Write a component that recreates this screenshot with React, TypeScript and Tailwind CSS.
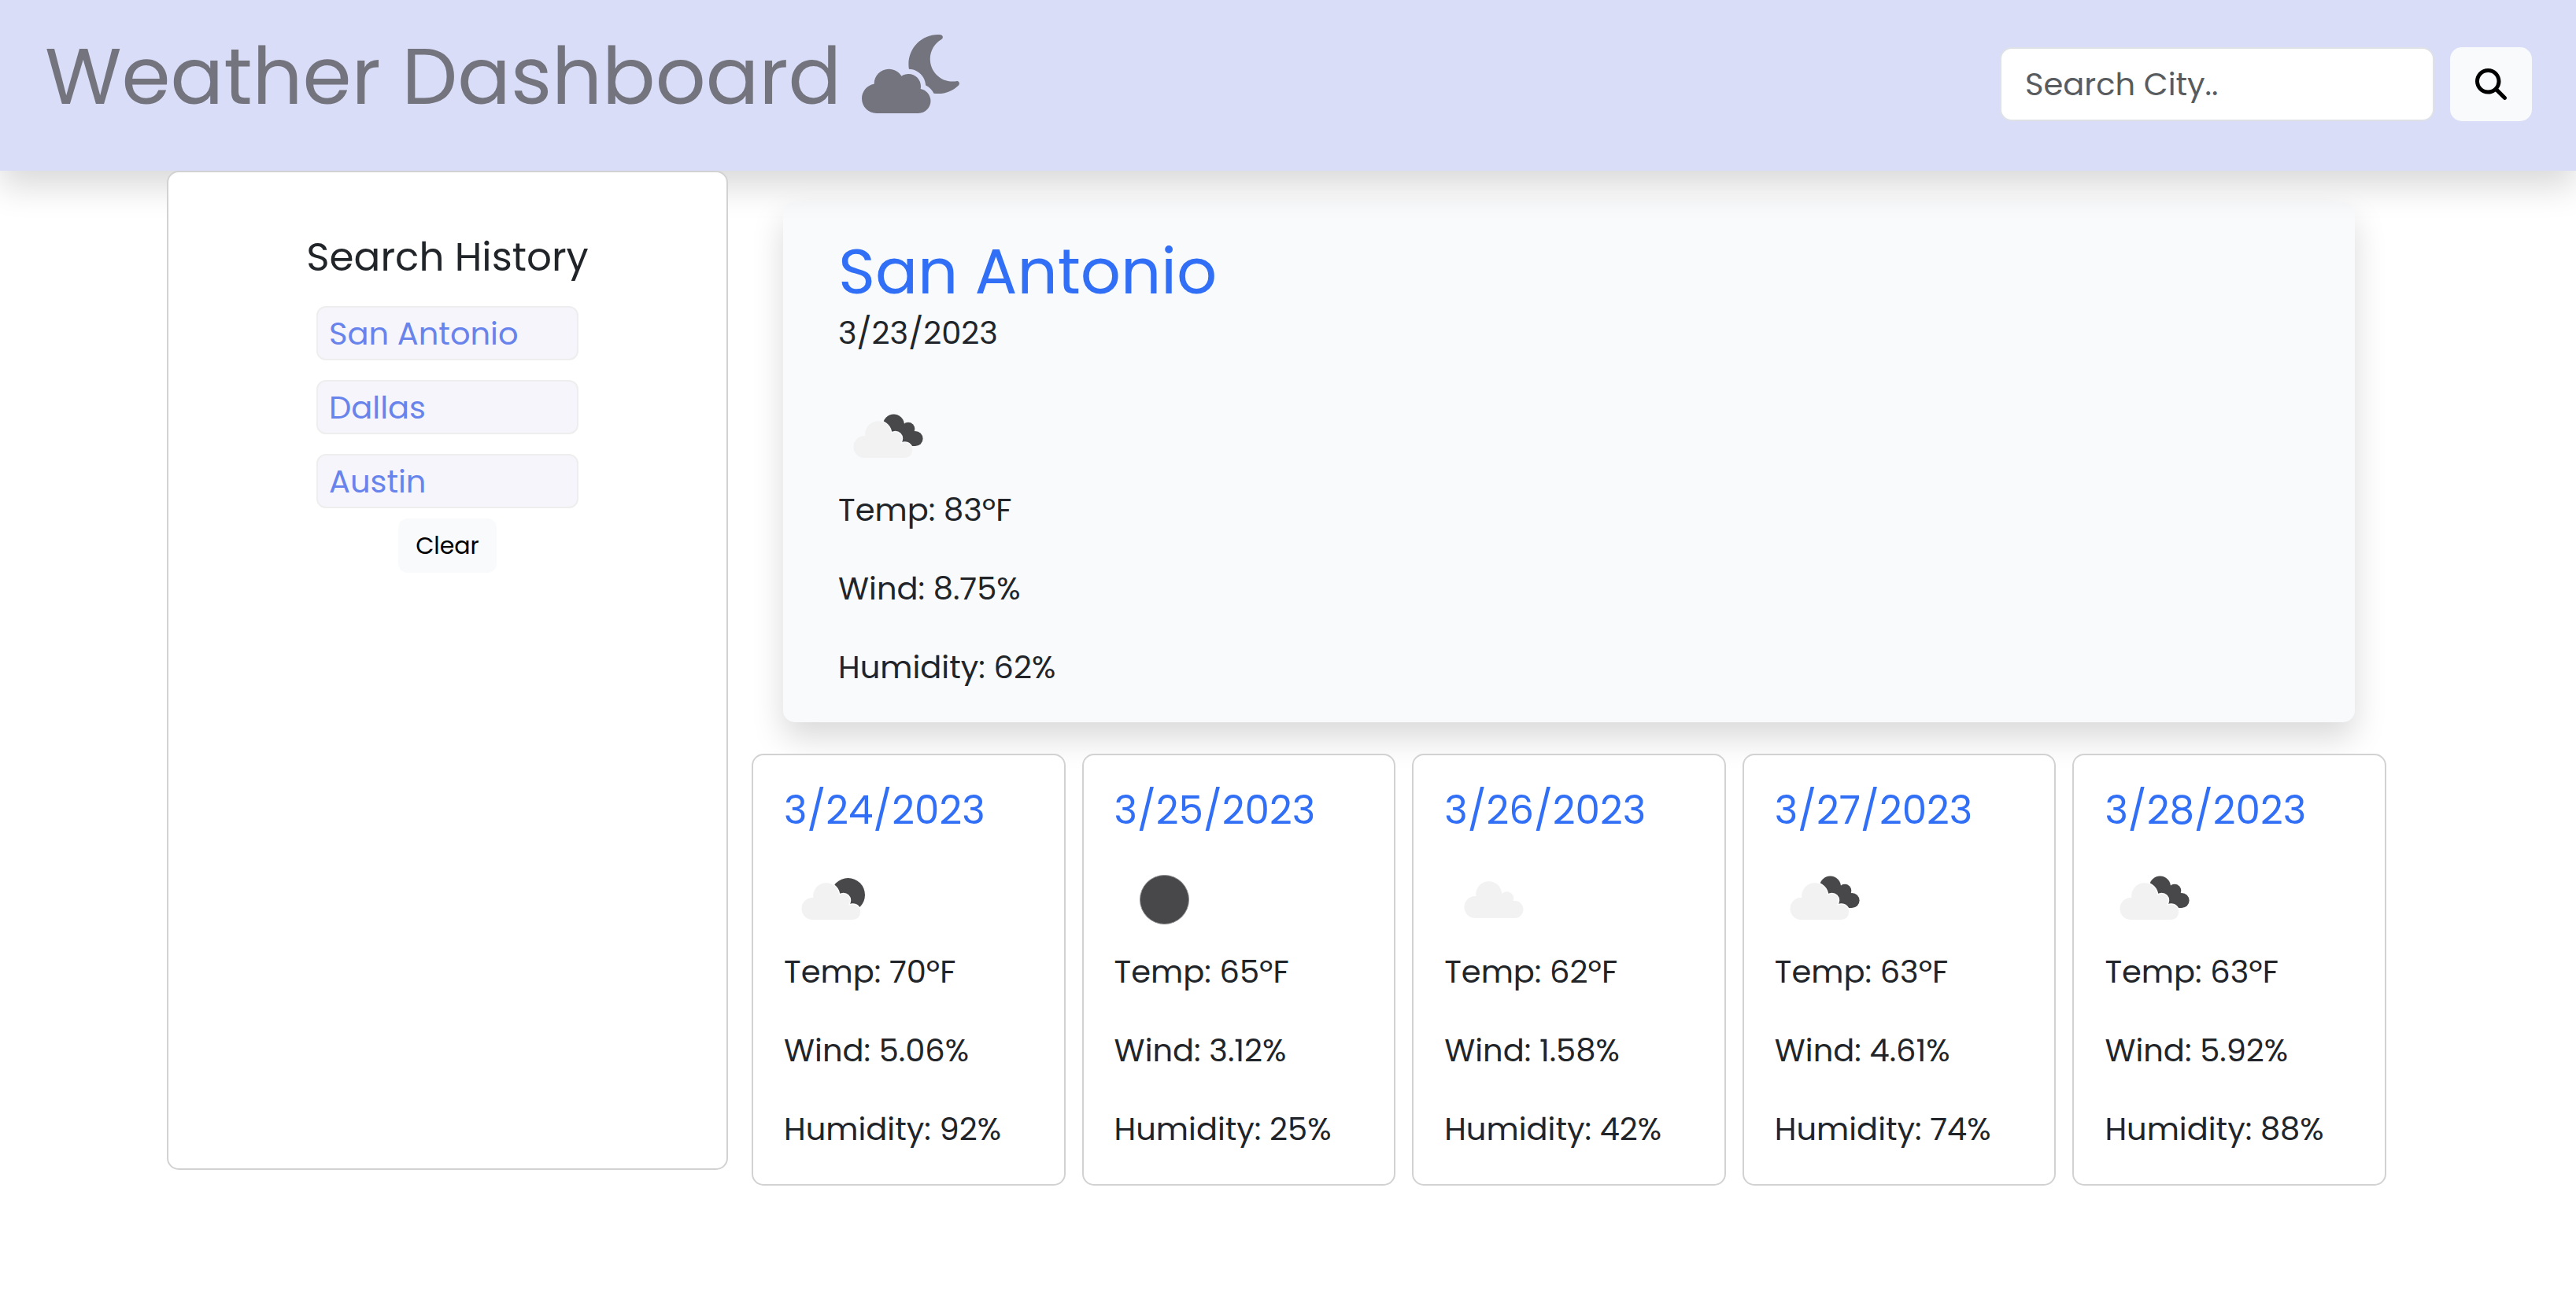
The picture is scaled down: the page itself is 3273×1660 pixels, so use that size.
import { useId, useState } from "react";
import type { FormEvent } from "react";
import { FaCloudMoon, FaMagnifyingGlass } from "react-icons/fa6";

type Sky = "few" | "clear" | "scattered" | "broken";

interface Reading {
  date: string;
  sky: Sky;
  temp: number;
  wind: string;
  humidity: number;
}

const today: Reading & { city: string } = {
  city: "San Antonio",
  date: "3/23/2023",
  sky: "broken",
  temp: 83,
  wind: "8.75",
  humidity: 62,
};

const forecast: Reading[] = [
  { date: "3/24/2023", sky: "few", temp: 70, wind: "5.06", humidity: 92 },
  { date: "3/25/2023", sky: "clear", temp: 65, wind: "3.12", humidity: 25 },
  { date: "3/26/2023", sky: "scattered", temp: 62, wind: "1.58", humidity: 42 },
  { date: "3/27/2023", sky: "broken", temp: 63, wind: "4.61", humidity: 74 },
  { date: "3/28/2023", sky: "broken", temp: 63, wind: "5.92", humidity: 88 },
];

function CloudShape({ layered }: { layered: boolean }) {
  return (
    <>
      <circle cx="37.5" cy="72" r="14" />
      <circle cx="54.7" cy="55.7" r="16.5" />
      {layered ? (
        <>
          <circle cx="76.5" cy="61.5" r="8.5" />
          <circle cx="88.5" cy="76.3" r="9.7" />
          <path d="M37.5 60H78L84 68L88.5 76V86H37.5Z" />
        </>
      ) : (
        <>
          <circle cx="77.5" cy="61" r="8.8" />
          <circle cx="87.5" cy="75" r="11" />
          <path d="M37.5 60H80L87.5 66V86H37.5Z" />
        </>
      )}
    </>
  );
}

function SkyIcon({ sky }: { sky: Sky }) {
  const maskId = useId();
  const layered = sky !== "scattered";
  const shift = sky === "few" ? "translate(-1 3)" : sky === "broken" ? "translate(-4 3)" : "translate(2 1)";
  return (
    <svg viewBox="0 0 125 125" className="block size-[125px]" role="img" aria-label={`${sky} sky`}>
      <mask id={maskId} maskUnits="userSpaceOnUse" x="0" y="0" width="125" height="125">
        <rect width="125" height="125" fill="white" />
        <g transform={shift} fill="black" stroke="black" strokeWidth="2.5">
          <CloudShape layered={layered} />
        </g>
      </mask>
      {sky === "clear" && <circle cx="63.5" cy="63.5" r="31" fill="#48484a" stroke="#8e8e90" strokeWidth="1" />}
      {sky === "few" && <circle cx="81.5" cy="57.5" r="21.5" fill="#48484a" mask={`url(#${maskId})`} />}
      {sky === "broken" && (
        <g fill="#48484a" mask={`url(#${maskId})`}>
          <circle cx="70.5" cy="47" r="13.5" />
          <circle cx="89" cy="52" r="8.3" />
          <circle cx="98" cy="64.5" r="9.6" />
          <path d="M70 36L83 45L97 55L98 74L88 74L60 57Z" />
        </g>
      )}
      {sky !== "clear" && (
        <g transform={shift} fill="#f2f2f2">
          <CloudShape layered={layered} />
        </g>
      )}
    </svg>
  );
}

function Readings({ reading }: { reading: Reading }) {
  return (
    <div className="flex flex-col gap-10">
      <p>Temp: {reading.temp}ºF</p>
      <p>Wind: {reading.wind}%</p>
      <p>Humidity: {reading.humidity}%</p>
    </div>
  );
}

export default function App() {
  const [query, setQuery] = useState("");
  const [history, setHistory] = useState(["San Antonio", "Dallas", "Austin"]);

  const search = (event: FormEvent) => {
    event.preventDefault();
    const city = query.trim();
    if (city) {
      setHistory([city, ...history.filter((item) => item !== city)]);
      setQuery("");
    }
  };

  return (
    <div className="min-h-screen bg-white font-['Poppins','Inter',sans-serif] text-[40px] leading-[60px] text-[#212529]">
      <header className="relative z-10 flex items-start justify-between bg-[#d9ddf7] pr-[56px] pb-[63px] pl-[57px] shadow-[0_20px_40px_rgba(0,0,0,0.15)]">
        <h1 className="flex items-start gap-[26px] pt-[44px] text-[100px] leading-[106px] text-[#74747e]">
          Weather Dashboard
          <FaCloudMoon className="h-[100px] w-[125px]" aria-hidden="true" />
        </h1>
        <form onSubmit={search} className="flex items-center gap-5 pt-[60px]">
          <input
            type="text"
            aria-label="Search City"
            placeholder="Search City.."
            value={query}
            onChange={(event) => setQuery(event.target.value)}
            className="h-[94px] w-[552px] rounded-[15px] border-2 border-[#dee2e6] bg-white px-[30px] placeholder:text-[#595c5f]"
          />
          <button
            type="submit"
            aria-label="Search"
            className="flex h-[94px] w-[104px] items-center justify-center rounded-[15px] bg-[#f8fafc] text-black"
          >
            <FaMagnifyingGlass className="size-10" />
          </button>
        </form>
      </header>

      <main className="flex gap-[30px] pr-[241px] pl-[212px]">
        <aside className="relative z-20 mb-5 flex w-[713px] shrink-0 flex-col items-center rounded-[15px] border-2 border-[#d2d2d2] bg-white pt-[78px]">
          <h2 className="mb-8 text-[50px]">Search History</h2>
          <ul className="flex flex-col gap-[25px]">
            {history.map((city) => (
              <li key={city}>
                <button
                  type="button"
                  onClick={() => setQuery(city)}
                  className="block h-[69px] w-[333px] rounded-[12px] border-2 border-[#eeeeee] bg-[#f5f5fb] px-[14px] text-left text-[#6883ec]"
                >
                  {city}
                </button>
              </li>
            ))}
          </ul>
          <button
            type="button"
            onClick={() => setHistory([])}
            className="mt-[13px] h-[69px] w-[125px] rounded-[12px] bg-[#f8fafc] text-[30px] text-black"
          >
            Clear
          </button>
        </aside>

        <div className="min-w-0 flex-1">
          <section className="mx-10 mt-10 rounded-[15px] bg-[#f8fafc] px-[70px] py-10 shadow-[0_20px_40px_rgba(0,0,0,0.15)]">
            <h2 className="text-[80px] leading-[96px] text-[#316ff6]">{today.city}</h2>
            <p className="mb-10">{today.date}</p>
            <SkyIcon sky={today.sky} />
            <Readings reading={today} />
          </section>

          <section aria-label="Five day forecast" className="mt-10 grid grid-cols-5 gap-[21px]">
            {forecast.map((day) => (
              <article
                key={day.date}
                className="relative z-20 rounded-[15px] border-2 border-[#d2d2d2] bg-white px-[39px] py-10"
              >
                <h3 className="mb-5 text-[50px] text-[#316ff6]">{day.date}</h3>
                <SkyIcon sky={day.sky} />
                <Readings reading={day} />
              </article>
            ))}
          </section>
        </div>
      </main>
    </div>
  );
}
